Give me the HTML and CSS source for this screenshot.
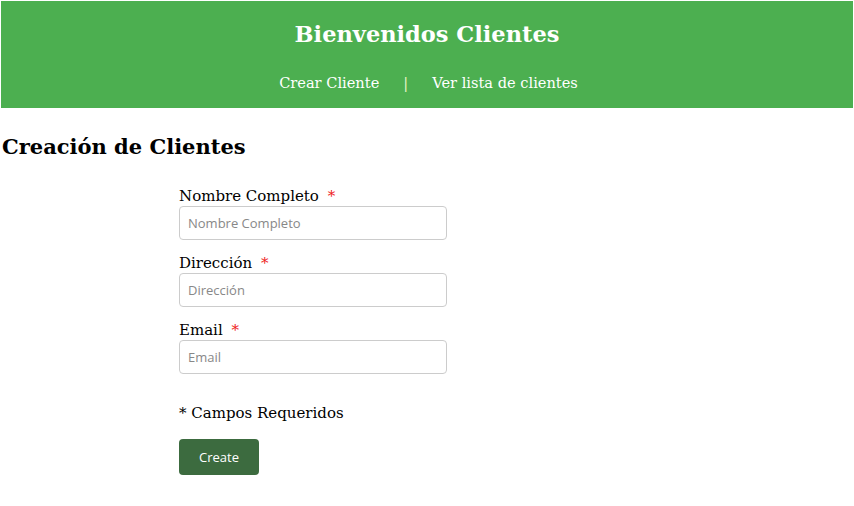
FILE: index.html
```html
<!DOCTYPE html>
<html lang="es">
<head>
<meta charset="utf-8">
<title>Clientes</title>
<link rel="stylesheet" href="styles.css">
</head>
<body>
<header class="header">
  <h1 class="title">Bienvenidos Clientes</h1>
  <nav class="nav">
    <a class="nav-link" href="#">Crear Cliente</a>
    <span class="nav-sep">|</span>
    <a class="nav-link" href="#">Ver lista de clientes</a>
  </nav>
</header>
<h2 class="page-title">Creación de Clientes</h2>
<form class="form">
  <div class="group">
    <label class="label">Nombre Completo <span class="req">*</span></label>
    <input class="input" type="text" placeholder="Nombre Completo">
  </div>
  <div class="group">
    <label class="label">Dirección <span class="req">*</span></label>
    <input class="input" type="text" placeholder="Dirección">
  </div>
  <div class="group">
    <label class="label">Email <span class="req">*</span></label>
    <input class="input" type="text" placeholder="Email">
  </div>
  <p class="note">* Campos Requeridos</p>
  <button class="btn" type="button">Create</button>
</form>
</body>
</html>
```
FILE: styles.css
```css
html, body { margin: 0; padding: 0; }
body {
  padding: 1px;
  font-family: "DejaVu Serif", serif;
  color: #111;
  background: #fff;
}
.header {
  background: #4caf50;
  color: #fff;
  text-align: center;
  height: 107px;
  box-sizing: border-box;
  padding-top: 17px;
}
.title {
  margin: 0;
  font-size: 22.5px;
  font-weight: bold;
  line-height: 32px;
}
.nav {
  margin-top: 23px;
  display: flex;
  justify-content: center;
  gap: 24px;
  padding-left: 3px;
  font-size: 14.6px;
  line-height: 20px;
}
.nav-link { color: #fff; text-decoration: none; }
.nav-sep { color: #e8f5c8; font-weight: 300; }
.page-title {
  margin: 24px 0 0 1px;
  font-size: 21px;
  font-weight: bold;
  line-height: 30px;
  color: #000;
}
.form {
  margin: 24px 0 0 178px;
  width: 268px;
}
.group { margin-bottom: 13px; }
.label {
  display: block;
  font-size: 15px;
  line-height: 20px;
  margin-bottom: 0;
  color: #000;
}
.req { color: #e22; margin-left: 4px; }
.input {
  display: block;
  box-sizing: border-box;
  width: 268px;
  height: 34px;
  border: 1px solid #ccc;
  border-radius: 4px;
  padding: 0 8px;
  font-family: "Open Sans", sans-serif;
  font-size: 13px;
  color: #333;
}
.input::placeholder { color: #888; }
.note {
  margin: 29px 0 16px 0;
  font-size: 15px;
  line-height: 20px;
  color: #000;
}
.btn {
  display: block;
  width: 80px;
  height: 36px;
  border: none;
  border-radius: 4px;
  background: #3c6b3f;
  color: #fff;
  font-family: "Open Sans", sans-serif;
  font-size: 13px;
}
```
